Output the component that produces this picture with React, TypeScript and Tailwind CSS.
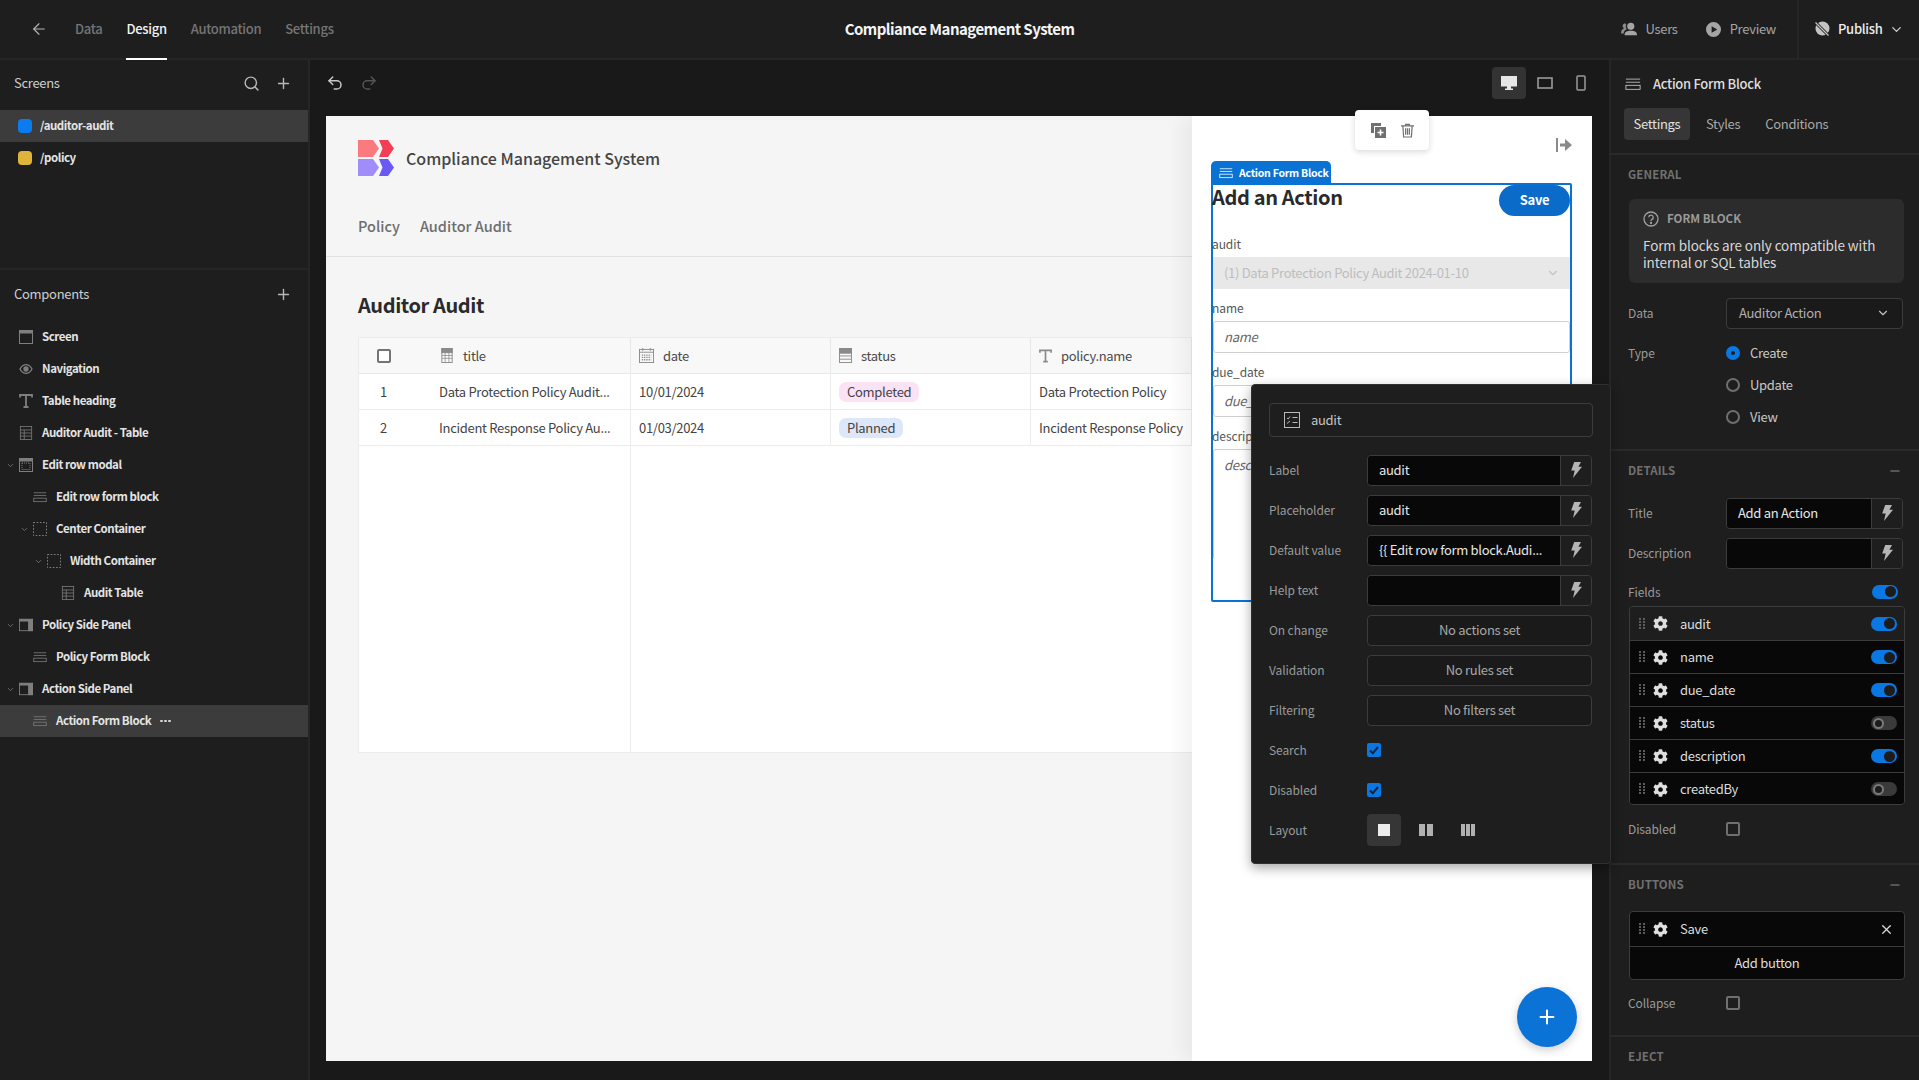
import React from "react";
import { ArrowLeft, ChevronDown, Minus, Plus, Redo2, Search, Undo2, X } from "lucide-react";
import { FaCog } from "react-icons/fa";

type IconProps = { className?: string };

// body and label sizes, tightened so the widths follow the reference
const body = "text-[13px] tracking-[-0.3px]";
const label = "text-[12px] tracking-[-0.1px] text-[#9a9a9a]";
const tree = "text-[11.5px] tracking-[-0.45px] font-semibold text-[#e4e4e4]";

function FormIcon({ className }: IconProps) {
  return (
    <svg viewBox="0 0 18 14" className={className} fill="none" stroke="currentColor" strokeWidth="1">
      <path d="M1 1.500h16M1 5h16" />
      <rect x="1" y="8.500" width="16" height="4.500" />
    </svg>
  );
}

function ScreenIcon({ className }: IconProps) {
  return (
    <svg viewBox="0 0 14 14" className={className} fill="none" stroke="currentColor">
      <rect x="0.500" y="0.500" width="13" height="13" />
      <rect x="0.500" y="0.500" width="13" height="2.500" fill="currentColor" />
    </svg>
  );
}

function EyeIcon({ className }: IconProps) {
  return (
    <svg viewBox="0 0 14 14" className={className} fill="none" stroke="currentColor" strokeWidth="1.300">
      <path d="M1 7c1.500-3 3.500-4.400 6-4.400S11.500 4 13 7c-1.500 3-3.500 4.400-6 4.400S2.500 10 1 7z" />
      <circle cx="7" cy="7" r="2" fill="currentColor" />
    </svg>
  );
}

function TextIcon({ className }: IconProps) {
  return (
    <svg viewBox="0 0 14 14" className={className} fill="none" stroke="currentColor" strokeWidth="1.800">
      <path d="M1 3.500V1h12v2.500M7 1v12M4.500 13h5" />
    </svg>
  );
}

function TableIcon({ className }: IconProps) {
  return (
    <svg viewBox="0 0 14 16" className={className} fill="none" stroke="currentColor" strokeWidth="0.900">
      <rect x="0.500" y="0.500" width="13" height="15" />
      <path d="M0.500 4.500h13M0.500 8h13M0.500 11.500h13M5 4.500v11" />
    </svg>
  );
}

function CalcIcon({ className }: IconProps) {
  return (
    <svg viewBox="0 0 12 16" className={className} fill="none" stroke="currentColor">
      <rect x="0.500" y="0.500" width="11" height="15" />
      <rect x="0.500" y="0.500" width="11" height="4.500" fill="currentColor" />
      <path d="M0.500 8h11M0.500 11h11M4 5v10.500M8 5v10.500" strokeWidth="0.800" />
    </svg>
  );
}

function DateIcon({ className }: IconProps) {
  return (
    <svg viewBox="0 0 16 16" className={className} fill="none" stroke="currentColor">
      <rect x="0.500" y="1.500" width="15" height="14" />
      <path d="M4 0v3M12 0v3M0.500 4.500h15" />
      <path d="M3 7.500h10M3 10h10M3 12.500h10" strokeWidth="1.400" strokeDasharray="1.400 1" />
    </svg>
  );
}

function StatusIcon({ className }: IconProps) {
  return (
    <svg viewBox="0 0 14 16" className={className} fill="none" stroke="currentColor">
      <rect x="0.500" y="0.500" width="13" height="15" />
      <rect x="0.500" y="0.500" width="13" height="5" fill="currentColor" />
      <path d="M0.500 8.500h13M0.500 12h13" />
    </svg>
  );
}

function ModalIcon({ className }: IconProps) {
  return (
    <svg viewBox="0 0 14 14" className={className} fill="none" stroke="currentColor">
      <rect x="0.500" y="0.500" width="13" height="13" />
      <rect x="0.500" y="0.500" width="13" height="2.500" fill="currentColor" />
      <rect x="3" y="5" width="8" height="6.500" strokeDasharray="1 1" />
    </svg>
  );
}

function DashedIcon({ className }: IconProps) {
  return (
    <svg viewBox="0 0 14 14" className={className} fill="none" stroke="currentColor" strokeDasharray="1.600 1.600">
      <rect x="0.500" y="0.500" width="13" height="13" />
    </svg>
  );
}

function SidePanelIcon({ className }: IconProps) {
  return (
    <svg viewBox="0 0 16 14" className={className} fill="none" stroke="currentColor">
      <rect x="0.500" y="0.500" width="15" height="13" />
      <rect x="0.500" y="0.500" width="15" height="2" fill="currentColor" />
      <rect x="11" y="2.500" width="4.500" height="11" fill="currentColor" />
    </svg>
  );
}

function Bolt() {
  return (
    <svg viewBox="0 0 12 16" className="h-[16px] w-[12px] text-[#b5b5b5]" fill="currentColor">
      <path d="M4.200 0H11L8.400 4.800H12L3 16l1.700-7.600H1.200z" />
    </svg>
  );
}

function Grip() {
  return (
    <svg viewBox="0 0 6 12" className="h-[12px] w-[6px] text-[#5c5c5c]" fill="currentColor">
      {[0, 3, 6, 9].map((y) => (
        <g key={y}>
          <rect x="0" y={y} width="2" height="2" />
          <rect x="4" y={y} width="2" height="2" />
        </g>
      ))}
    </svg>
  );
}

function Logo() {
  return (
    <svg viewBox="0 0 36 36" className="h-9 w-9">
      <path d="M0 0h15l6 8.500-6 8.500H0z" fill="#fb7a7f" />
      <path d="M21 0h9l6 8.500-6 8.500h-9l3.500-8.500z" fill="#f23f55" />
      <path d="M0 19h15l6 8.500-6 8.500H0z" fill="#a08dfb" />
      <path d="M21 19h9l6 8.500-6 8.500h-9l3.500-8.500z" fill="#6a58f5" />
    </svg>
  );
}

const screenRows = [
  { name: "/auditor-audit", color: "bg-[#0a7cf0]", active: true },
  { name: "/policy", color: "bg-[#e0b33a]", active: false },
];

const componentRows = [
  { name: "Screen", depth: 0, icon: ScreenIcon, open: false },
  { name: "Navigation", depth: 0, icon: EyeIcon, open: false },
  { name: "Table heading", depth: 0, icon: TextIcon, open: false },
  { name: "Auditor Audit - Table", depth: 0, icon: TableIcon, open: false },
  { name: "Edit row modal", depth: 0, icon: ModalIcon, open: true },
  { name: "Edit row form block", depth: 1, icon: FormIcon, open: false },
  { name: "Center Container", depth: 1, icon: DashedIcon, open: true },
  { name: "Width Container", depth: 2, icon: DashedIcon, open: true },
  { name: "Audit Table", depth: 3, icon: TableIcon, open: false },
  { name: "Policy Side Panel", depth: 0, icon: SidePanelIcon, open: true },
  { name: "Policy Form Block", depth: 1, icon: FormIcon, open: false },
  { name: "Action Side Panel", depth: 0, icon: SidePanelIcon, open: true },
  { name: "Action Form Block", depth: 1, icon: FormIcon, open: false, active: true },
];

function LeftPanel() {
  return (
    <div className="flex w-[310px] shrink-0 flex-col border-r-2 border-[#262626] bg-[#1e1e1e]">
      <div className="h-[210px] border-b-2 border-[#262626]">
        <div className="mb-1 flex h-[46px] items-center justify-between pl-[14px] pr-[16px]">
          <span className={`${body} text-[#cfcfcf]`}>Screens</span>
          <div className="flex items-center gap-[15px] text-[#b8b8b8]">
            <Search size={17} />
            <Plus size={17} />
          </div>
        </div>
        {screenRows.map((r) => (
          <div key={r.name} className={`flex h-8 items-center gap-2 pl-[18px] ${r.active ? "bg-[#3c3c3c]" : ""}`}>
            <span className={`h-[14px] w-[14px] rounded-[4px] ${r.color}`} />
            <span className={tree}>{r.name}</span>
          </div>
        ))}
      </div>
      <div className="flex h-[51px] items-center justify-between pb-[3px] pl-[14px] pr-[16px]">
        <span className={`${body} text-[#cfcfcf]`}>Components</span>
        <Plus size={17} className="text-[#b8b8b8]" />
      </div>
      {componentRows.map((r) => {
        const Icon = r.icon;
        return (
          <div
            key={r.name}
            className={`relative flex h-8 items-center ${r.active ? "bg-[#3c3c3c]" : ""}`}
            style={{ paddingLeft: 19 + r.depth * 14 }}
          >
            {r.open && (
              <ChevronDown
                size={9}
                strokeWidth={2}
                className="absolute text-[#7d7d7d]"
                style={{ left: 6 + r.depth * 14 }}
              />
            )}
            <Icon className="h-[14px] w-[14px] text-[#7f7f7f]" />
            <span className={`ml-[9px] ${tree}`}>{r.name}</span>
            {r.active && (
              <span className="ml-[9px] flex gap-[1.500px]">
                <span className="h-[2.500px] w-[2.500px] rounded-full bg-[#d8d8d8]" />
                <span className="h-[2.500px] w-[2.500px] rounded-full bg-[#d8d8d8]" />
                <span className="h-[2.500px] w-[2.500px] rounded-full bg-[#d8d8d8]" />
              </span>
            )}
          </div>
        );
      })}
    </div>
  );
}

function TopBar() {
  return (
    <div className="relative flex h-[60px] shrink-0 items-center border-b-2 border-[#262626] bg-[#1e1e1e]">
      <ArrowLeft size={18} strokeWidth={1.500} className="ml-[30px] text-[#b5b5b5]" />
      <div className={`ml-[27px] flex h-full gap-6 font-medium text-[#757575] ${body}`}>
        <span className="flex items-center">Data</span>
        <span className="relative flex items-center text-[#f2f2f2]">
          Design
          <span className="absolute -bottom-[2px] left-0 h-[2px] w-full bg-white" />
        </span>
        <span className="flex items-center">Automation</span>
        <span className="flex items-center">Settings</span>
      </div>
      <div className="absolute left-0 right-0 text-center text-[15px] font-semibold tracking-[-0.55px] text-[#f4f4f4]">
        Compliance Management System
      </div>
      <div className={`ml-auto flex h-full items-center text-[#a5a5a5] ${body}`}>
        <svg viewBox="0 0 18 16" className="mr-2 h-4 w-4" fill="currentColor">
          <circle cx="11" cy="5" r="4" />
          <path d="M4 15c0-4 2.500-5 7-5s7 1 7 5z" />
          <path d="M4.500 1.500a3 3 0 0 0-1 5.700C1.500 8 0 9.500 0 13h3c.3-2.500 1.500-4 3.500-4.800C5.500 7 5 5 6 3.300z" opacity="0.8" />
        </svg>
        <span>Users</span>
        <svg viewBox="0 0 16 16" className="ml-[28px] mr-[9px] h-[15px] w-[15px]" fill="currentColor">
          <path fillRule="evenodd" d="M8 0a8 8 0 1 1 0 16A8 8 0 0 1 8 0zM6 4.500v7L12 8z" />
        </svg>
        <span>Preview</span>
        <div className="ml-[21px] flex h-full w-[122px] items-center border-l-2 border-[#262626] pl-[15px] text-[#ededed]">
          <svg viewBox="0 0 16 16" className="mr-2 h-4 w-4 text-[#c4c4c4]" fill="currentColor">
            <circle cx="8.500" cy="7.500" r="7" />
            <path d="M1 1l14 14" stroke="#1e1e1e" strokeWidth="3" />
            <path d="M1.500 1.500l13 13" stroke="currentColor" strokeWidth="1.200" />
          </svg>
          <span className="font-medium">Publish</span>
          <ChevronDown size={15} className="ml-[6px] text-[#d0d0d0]" />
        </div>
      </div>
    </div>
  );
}

function HeaderCell({ icon, text }: { icon: React.ReactNode; text: string }) {
  return (
    <div className={`flex h-full items-center gap-[9px] border-r border-[#e8e8e8] pl-[8px] text-[#4a4a4a] ${body}`}>
      {icon}
      <span>{text}</span>
    </div>
  );
}

function BodyCell({ children }: { children: React.ReactNode }) {
  return <div className={`flex h-full items-center whitespace-nowrap border-r border-[#ececec] pl-[8px] text-[#444] ${body}`}>{children}</div>;
}

function TablePreview() {
  const rows = [
    { id: 1, title: "Data Protection Policy Audit...", date: "10/01/2024", status: "Completed", tone: "bg-[#fbe2f5]", policy: "Data Protection Policy" },
    { id: 2, title: "Incident Response Policy Au...", date: "01/03/2024", status: "Planned", tone: "bg-[#dce7f9]", policy: "Incident Response Policy" },
  ];
  return (
    <div className="mt-[16px] flex h-[416px] flex-col border-y border-l border-[#ececec] bg-white">
      <div className="grid h-9 shrink-0 grid-cols-[272px_200px_200px_1fr] border-b border-[#e8e8e8] bg-[#f8f8f8]">
        <div className="flex h-full items-center border-r border-[#e8e8e8]">
          <span className="ml-[18px] h-[14px] w-[14px] rounded-[2px] border-2 border-[#757575] bg-white" />
          <CalcIcon className="ml-[50px] h-[15px] w-[12px] text-[#8a8a8a]" />
          <span className={`ml-[10px] text-[#4a4a4a] ${body}`}>title</span>
        </div>
        <HeaderCell icon={<DateIcon className="h-[15px] w-[15px] text-[#8a8a8a]" />} text="date" />
        <HeaderCell icon={<StatusIcon className="h-[15px] w-[13px] text-[#8a8a8a]" />} text="status" />
        <HeaderCell icon={<TextIcon className="h-[14px] w-[13px] text-[#8a8a8a]" />} text="policy.name" />
      </div>
      {rows.map((r) => (
        <div key={r.id} className="grid h-9 shrink-0 grid-cols-[272px_200px_200px_1fr] border-b border-[#ececec]">
          <div className={`flex h-full items-center border-r border-[#ececec] text-[#444] ${body}`}>
            <span className="w-[80px] pl-[21px]">{r.id}</span>
            <span className="whitespace-nowrap">{r.title}</span>
          </div>
          <BodyCell>{r.date}</BodyCell>
          <BodyCell>
            <span className={`flex h-5 items-center rounded-[7px] px-[8px] ${r.tone}`}>{r.status}</span>
          </BodyCell>
          <BodyCell>{r.policy}</BodyCell>
        </div>
      ))}
      <div className="flex-1">
        <div className="h-full w-[272px] border-r border-[#ececec]" />
      </div>
    </div>
  );
}

function FieldLabel({ children }: { children: React.ReactNode }) {
  return <div className="-ml-px mb-1 text-[12px] leading-[18px] tracking-[-0.1px] text-[#555]">{children}</div>;
}

function SidePreview() {
  return (
    <div className="relative w-[400px] shrink-0 bg-white shadow-[-10px_0_18px_rgba(0,0,0,0.05)]">
      <div className="flex h-[67px] justify-end pr-[20px] pt-[21px] text-[#8a8a8a]">
        <svg viewBox="0 0 16 16" className="h-4 w-4" fill="currentColor">
          <rect x="0" y="1" width="2" height="14" />
          <path d="M4 6.500h5V2l7 6-7 6V9.500H4z" />
        </svg>
      </div>
      <div className="relative ml-[19px] h-[419px] w-[361px] rounded-[2px] border-2 border-[#0a72d2]">
        <div className="absolute -left-[2px] -top-[24px] flex h-[24px] w-[120px] items-center gap-[6px] whitespace-nowrap rounded-t-[5px] bg-[#0a72d2] pl-[8px] text-[10.500px] font-semibold tracking-[-0.25px] text-white">
          <FormIcon className="h-[12px] w-[14px] shrink-0" />
          <span>Action Form Block</span>
        </div>
        <div className="flex h-[31px] items-start justify-between">
          <span className="-ml-px text-[20px] font-semibold leading-[24px] tracking-[-0.35px] text-[#2a2a2a]">Add an Action</span>
          <span className={`flex h-[31px] w-[71px] items-center justify-center rounded-full bg-[#0b6bc9] pb-[2px] font-semibold text-white ${body}`}>
            Save
          </span>
        </div>
        <div className="mt-[19px]">
          <FieldLabel>audit</FieldLabel>
          <div className={`flex h-8 items-center justify-between bg-[#e8e8e8] pl-[11px] pr-[10px] text-[#bdbdbd] ${body}`}>
            <span>(1) Data Protection Policy Audit 2024-01-10</span>
            <ChevronDown size={14} className="text-[#c4c4c4]" />
          </div>
        </div>
        <div className="mt-[10px]">
          <FieldLabel>name</FieldLabel>
          <div className={`flex h-8 items-center rounded-[3px] border border-[#cfcfcf] pl-[10px] italic text-[#666] ${body}`}>name</div>
        </div>
        <div className="mt-[10px]">
          <FieldLabel>due_date</FieldLabel>
          <div className={`flex h-8 items-center rounded-[3px] border border-[#cfcfcf] pl-[10px] italic text-[#666] ${body}`}>due_date</div>
        </div>
        <div className="mt-[10px]">
          <FieldLabel>description</FieldLabel>
          <div className={`h-[110px] rounded-[3px] border-x border-t border-[#cfcfcf] pl-[10px] pt-[5px] italic text-[#666] ${body}`}>description</div>
        </div>
      </div>
      <div className="absolute bottom-[14px] right-[15px] flex h-[60px] w-[60px] items-center justify-center rounded-full bg-[#0b73d6] text-white shadow-[0_3px_10px_rgba(0,0,0,0.2)]">
        <Plus size={22} strokeWidth={2.200} />
      </div>
    </div>
  );
}

function Canvas() {
  return (
    <div className="flex min-w-0 flex-1 flex-col bg-[#191919] pl-4 pr-[17px]">
      <div className="flex h-[56px] shrink-0 items-center pb-[12px] pt-[2px]">
        <Undo2 size={18} className="text-[#c8c8c8]" />
        <Redo2 size={18} className="ml-4 text-[#555]" />
        <div className="-mr-[6px] ml-auto flex items-center">
          <span className="flex h-8 w-[34px] items-center justify-center rounded-[4px] bg-[#333]">
            <svg viewBox="0 0 16 14" className="h-[14px] w-[16px] text-[#e6e6e6]" fill="currentColor">
              <path fillRule="evenodd" d="M0 0h16v10.500H10V12.500h2V14H4v-1.500h2V10.500H0z" />
            </svg>
          </span>
          <span className="flex h-8 w-[38px] items-center justify-center">
            <svg viewBox="0 0 16 12" className="h-[12px] w-[16px] text-[#9a9a9a]" fill="none" stroke="currentColor" strokeWidth="1.600">
              <rect x="1" y="1" width="14" height="10" />
            </svg>
          </span>
          <span className="flex h-8 w-[34px] items-center justify-center">
            <svg viewBox="0 0 10 16" className="h-[16px] w-[10px] text-[#9a9a9a]" fill="none" stroke="currentColor" strokeWidth="1.500">
              <rect x="1" y="1" width="8" height="14" rx="1" />
            </svg>
          </span>
        </div>
      </div>
      <div className="flex h-[945px] shrink-0 overflow-hidden">
        <div className="min-w-0 flex-1 bg-[#f5f5f5]">
          <div className="h-[141px] border-b border-[#e0e0e0] pl-8 pt-6">
            <div className="flex h-9 items-center gap-3">
              <Logo />
              <span className="pb-px text-[16px] font-medium tracking-normal text-[#444]">Compliance Management System</span>
            </div>
            <div className="mt-[39px] flex gap-5 text-[14.500px] font-medium text-[#6e6e6e]">
              <span>Policy</span>
              <span>Auditor Audit</span>
            </div>
          </div>
          <div className="pl-8 pt-[32px]">
            <div className="text-[20px] font-semibold leading-[32px] tracking-[-0.4px] text-[#2a2a2a]">Auditor Audit</div>
            <TablePreview />
          </div>
        </div>
        <SidePreview />
      </div>
    </div>
  );
}

function SectionTitle({ title, collapse }: { title: string; collapse?: boolean }) {
  return (
    <div className="flex h-[20px] items-center justify-between pr-[17px]">
      <span className="text-[11.500px] font-semibold tracking-[0.1px] text-[#707070]">{title}</span>
      {collapse && <Minus size={14} className="text-[#8e8e8e]" />}
    </div>
  );
}

function BindInput({ value, width }: { value: string; width: string }) {
  return (
    <div className={`flex h-[31px] overflow-hidden rounded-[4px] border border-[#3c3c3c] ${width}`}>
      <div className={`flex min-w-0 flex-1 items-center whitespace-nowrap bg-[#080808] pl-[11px] pr-[10px] text-[#e6e6e6] ${body}`}>
        <span>{value}</span>
      </div>
      <div className="flex w-[31px] shrink-0 items-center justify-center border-l border-[#3c3c3c] bg-[#1e1e1e]">
        <Bolt />
      </div>
    </div>
  );
}

function Toggle({ on }: { on: boolean }) {
  return (
    <span className={`flex h-[14px] w-[26px] items-center rounded-full px-[2px] ${on ? "justify-end bg-[#0a78e2]" : "bg-[#3a3a3a]"}`}>
      <span className={`h-[11px] w-[11px] rounded-full ${on ? "bg-[#1c1c1c]" : "border-2 border-[#7a7a7a] bg-[#1c1c1c]"}`} />
    </span>
  );
}

function ListRow({ name, on, first }: { name: string; on: boolean; first?: boolean }) {
  return (
    <div className={`flex h-[33px] items-center border-[#3c3c3c] pl-[9px] pr-[7px] ${first ? "bg-[#1e1e1e]" : "border-t bg-[#080808]"}`}>
      <Grip />
      <FaCog size={15} className="ml-[8px] text-[#dedede]" />
      <span className={`ml-[12px] flex-1 text-[#dcdcdc] ${body}`}>{name}</span>
      <Toggle on={on} />
    </div>
  );
}

function RadioRow({ text, on }: { text: string; on?: boolean }) {
  return (
    <div className="flex h-8 items-center gap-[10px]">
      {on ? (
        <span className="flex h-[14px] w-[14px] items-center justify-center rounded-full bg-[#0a78e2]">
          <span className="h-1 w-1 rounded-full bg-[#1c1c1c]" />
        </span>
      ) : (
        <span className="h-[14px] w-[14px] rounded-full border-2 border-[#6f6f6f]" />
      )}
      <span className={`text-[#c8c8c8] ${body}`}>{text}</span>
    </div>
  );
}

function RightPanel() {
  return (
    <div className="w-[310px] shrink-0 overflow-hidden border-l-2 border-[#262626] bg-[#1e1e1e]">
      <div className="h-[95px] border-b-2 border-[#2a2a2a] pl-[13px]">
        <div className="flex h-[48px] items-center gap-3">
          <FormIcon className="ml-px h-[14px] w-4 text-[#c0c0c0]" />
          <span className={`font-medium text-[#dedede] ${body}`}>Action Form Block</span>
        </div>
        <div className={`flex items-center text-[#a8a8a8] ${body}`}>
          <span className="flex h-8 w-[66px] items-center justify-center rounded-[4px] bg-[#363636] text-[#e2e2e2]">Settings</span>
          <span className="ml-4">Styles</span>
          <span className="ml-[25px]">Conditions</span>
        </div>
      </div>
      <div className="h-[296px] border-b-2 border-[#2a2a2a] pl-[17px] pt-[10px]">
        <SectionTitle title="GENERAL" />
        <div className="ml-px mt-[14px] h-[84px] w-[275px] rounded-[6px] bg-[#2c2c2c] pl-[14px] pt-[12px]">
          <div className="flex h-4 items-center gap-2">
            <svg viewBox="0 0 16 16" className="h-4 w-4 text-[#a0a0a0]" fill="none" stroke="currentColor" strokeWidth="1.300">
              <circle cx="8" cy="8" r="7" />
              <path d="M5.800 6.300a2.200 2.200 0 1 1 3.200 2c-.7.4-1 .8-1 1.700" />
              <circle cx="8" cy="12" r="0.500" fill="currentColor" />
            </svg>
            <span className="text-[11.500px] font-semibold text-[#9a9a9a]">FORM BLOCK</span>
          </div>
          <p className="mt-[10px] w-[250px] text-[13.500px] leading-[17px] tracking-[-0.1px] text-[#d8d8d8]">
            Form blocks are only compatible with internal or SQL tables
          </p>
        </div>
        <div className="mt-[14px] flex h-8 items-center">
          <span className={`w-[98px] ${label}`}>Data</span>
          <div className={`flex h-[31px] w-[177px] items-center justify-between rounded-[4px] border border-[#3c3c3c] bg-[#1a1a1a] pl-[12px] pr-[12px] text-[#b0b0b0] ${body}`}>
            <span>Auditor Action</span>
            <ChevronDown size={14} className="text-[#c0c0c0]" />
          </div>
        </div>
        <div className="mt-[8px] flex">
          <span className={`flex h-8 w-[98px] items-center ${label}`}>Type</span>
          <div>
            <RadioRow text="Create" on />
            <RadioRow text="Update" />
            <RadioRow text="View" />
          </div>
        </div>
      </div>
      <div className="h-[414px] border-b-2 border-[#2a2a2a] pl-[17px] pt-[10px]">
        <SectionTitle title="DETAILS" collapse />
        <div className="mt-[16px] flex h-8 items-center">
          <span className={`w-[98px] ${label}`}>Title</span>
          <BindInput value="Add an Action" width="w-[177px]" />
        </div>
        <div className="mt-[8px] flex h-8 items-center">
          <span className={`w-[98px] ${label}`}>Description</span>
          <BindInput value="" width="w-[177px]" />
        </div>
        <div className="mt-[8px] flex h-[29px] w-[270px] items-center justify-between">
          <span className={label}>Fields</span>
          <Toggle on />
        </div>
        <div className="ml-px h-[199px] w-[276px] overflow-hidden rounded-[4px] border border-[#3c3c3c]">
          <ListRow name="audit" on first />
          <ListRow name="name" on />
          <ListRow name="due_date" on />
          <ListRow name="status" on={false} />
          <ListRow name="description" on />
          <ListRow name="createdBy" on={false} />
        </div>
        <div className="mt-[8px] flex h-8 items-center">
          <span className={`w-[98px] ${label}`}>Disabled</span>
          <span className="h-[14px] w-[14px] rounded-[2px] border-2 border-[#6f6f6f]" />
        </div>
      </div>
      <div className="h-[172px] border-b-2 border-[#2a2a2a] pl-[17px] pt-[10px]">
        <SectionTitle title="BUTTONS" collapse />
        <div className="ml-px mt-[16px] w-[276px] overflow-hidden rounded-[4px] border border-[#3c3c3c] bg-[#080808]">
          <div className="flex h-[34px] items-center pl-[9px] pr-[10px]">
            <Grip />
            <FaCog size={15} className="ml-[8px] text-[#dedede]" />
            <span className={`ml-[12px] flex-1 text-[#dcdcdc] ${body}`}>Save</span>
            <X size={15} className="text-[#dcdcdc]" />
          </div>
          <div className={`flex h-[33px] items-center justify-center border-t border-[#3c3c3c] text-[#dcdcdc] ${body}`}>Add button</div>
        </div>
        <div className="mt-[7px] flex h-8 items-center">
          <span className={`w-[98px] ${label}`}>Collapse</span>
          <span className="h-[14px] w-[14px] rounded-[2px] border-2 border-[#6f6f6f]" />
        </div>
      </div>
      <div className="pl-[17px] pt-[10px]">
        <SectionTitle title="EJECT" />
      </div>
    </div>
  );
}

function SettingRow({ text, children }: { text: string; children: React.ReactNode }) {
  return (
    <div className="flex h-10 items-center">
      <span className={`w-[98px] shrink-0 ${label}`}>{text}</span>
      {children}
    </div>
  );
}

function ActionBox({ text }: { text: string }) {
  return (
    <div className={`flex h-[31px] w-[225px] items-center justify-center rounded-[4px] border border-[#3c3c3c] bg-[#1a1a1a] text-[#a8a8a8] ${body}`}>
      {text}
    </div>
  );
}

function CheckedBox() {
  return (
    <span className="flex h-[14px] w-[14px] items-center justify-center rounded-[2px] bg-[#0a78e2]">
      <svg viewBox="0 0 14 14" className="h-[14px] w-[14px]" fill="none" stroke="#10243c" strokeWidth="2">
        <path d="M3 7.500l2.800 2.800L11 4" />
      </svg>
    </span>
  );
}

function FieldPopover() {
  return (
    <div className="absolute left-[1251px] top-[384px] h-[480px] w-[360px] rounded-[4px] border border-[#303030] bg-[#1e1e1e] pl-[17px] pt-[18px] shadow-[0_4px_12px_rgba(0,0,0,0.35)]">
      <div className={`flex h-[34px] w-[324px] items-center rounded-[4px] border border-[#3c3c3c] pl-[14px] text-[#c4c4c4] ${body}`}>
        <svg viewBox="0 0 16 16" className="mr-[11px] h-4 w-4 text-[#b8b8b8]" fill="none" stroke="currentColor">
          <rect x="0.500" y="0.500" width="15" height="15" />
          <path d="M8.500 5.500h5M8.500 10.500h5M3 6l1.200 1L6 4.500M3 11.500L6 9" />
        </svg>
        audit
      </div>
      <div className="mt-[13px]">
        <SettingRow text="Label"><BindInput value="audit" width="w-[225px]" /></SettingRow>
        <SettingRow text="Placeholder"><BindInput value="audit" width="w-[225px]" /></SettingRow>
        <SettingRow text="Default value"><BindInput value="{{ Edit row form block.Audi..." width="w-[225px]" /></SettingRow>
        <SettingRow text="Help text"><BindInput value="" width="w-[225px]" /></SettingRow>
        <SettingRow text="On change"><ActionBox text="No actions set" /></SettingRow>
        <SettingRow text="Validation"><ActionBox text="No rules set" /></SettingRow>
        <SettingRow text="Filtering"><ActionBox text="No filters set" /></SettingRow>
        <SettingRow text="Search"><CheckedBox /></SettingRow>
        <SettingRow text="Disabled"><CheckedBox /></SettingRow>
        <SettingRow text="Layout">
          <div className="flex items-center">
            <span className="flex h-8 w-[34px] items-center justify-center rounded-[4px] bg-[#363636]">
              <span className="h-3 w-3 bg-[#ececec]" />
            </span>
            <span className="ml-[8px] flex h-8 w-[34px] items-center justify-center gap-[2px]">
              <span className="h-3 w-[6px] bg-[#b0b0b0]" />
              <span className="h-3 w-[6px] bg-[#b0b0b0]" />
            </span>
            <span className="ml-[8px] flex h-8 w-[34px] items-center justify-center gap-[1px]">
              <span className="h-3 w-1 bg-[#b0b0b0]" />
              <span className="h-3 w-1 bg-[#b0b0b0]" />
              <span className="h-3 w-1 bg-[#b0b0b0]" />
            </span>
          </div>
        </SettingRow>
      </div>
    </div>
  );
}

function BlockToolbar() {
  return (
    <div className="absolute left-[1355px] top-[110px] flex h-[40px] w-[74px] items-center justify-center gap-[15px] rounded-[4px] bg-white text-[#707070] shadow-[0_2px_6px_rgba(0,0,0,0.15)]">
      <svg viewBox="0 0 15 15" className="h-[15px] w-[15px]" fill="currentColor">
        <path d="M0 0h10v3H3v7H0z" />
        <path fillRule="evenodd" d="M4 4h11v11H4zm4.700 2.500v2.200H6.500v1.600h2.200v2.200h1.600v-2.200h2.200V8.700h-2.200V6.500z" />
      </svg>
      <svg viewBox="0 0 14 15" className="h-[15px] w-[13px]" fill="none" stroke="currentColor" strokeWidth="1.300">
        <path d="M0 2.500h14M5 2.500V.8h4v1.700M2 2.500l.8 12h8.400l.8-12M5 5v7M7 5v7M9 5v7" />
      </svg>
    </div>
  );
}

export default function App() {
  return (
    <div className="relative flex h-[1080px] w-[1919px] flex-col overflow-hidden bg-[#191919] [font-family:'Noto_Sans_CJK_SC','Liberation_Sans',sans-serif]">
      <TopBar />
      <div className="flex min-h-0 flex-1">
        <LeftPanel />
        <Canvas />
        <RightPanel />
      </div>
      <BlockToolbar />
      <FieldPopover />
    </div>
  );
}
